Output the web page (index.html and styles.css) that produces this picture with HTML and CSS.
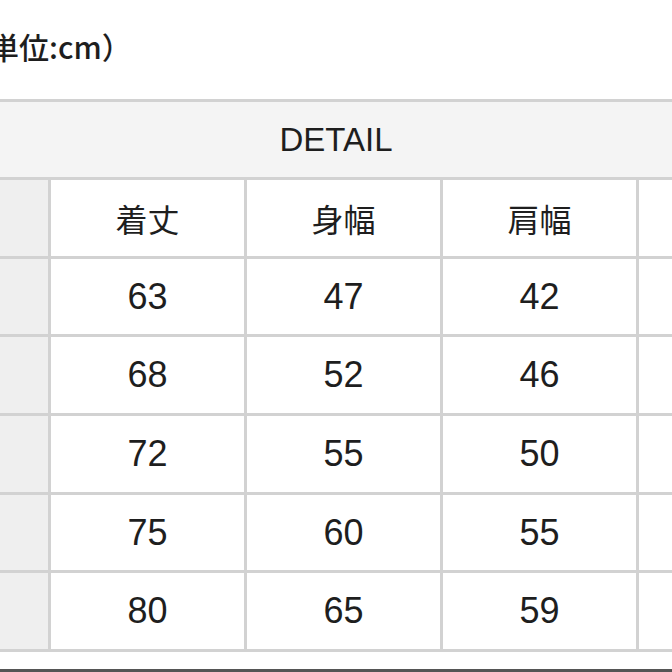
FILE: index.html
```html
<!DOCTYPE html>
<html lang="ja">
<head>
<meta charset="utf-8">
<link rel="stylesheet" href="styles.css">
</head>
<body>
<div class="page">
  <div class="unit">（単位:cm）</div>
  <div class="sheet">
    <div class="title">DETAIL</div>
    <div class="grid">
      <div class="cell label"></div><div class="cell head">着丈</div><div class="cell head">身幅</div><div class="cell head">肩幅</div><div class="cell"></div>
      <div class="cell label"></div><div class="cell num">63</div><div class="cell num">47</div><div class="cell num">42</div><div class="cell"></div>
      <div class="cell label"></div><div class="cell num">68</div><div class="cell num">52</div><div class="cell num">46</div><div class="cell"></div>
      <div class="cell label"></div><div class="cell num">72</div><div class="cell num">55</div><div class="cell num">50</div><div class="cell"></div>
      <div class="cell label"></div><div class="cell num">75</div><div class="cell num">60</div><div class="cell num">55</div><div class="cell"></div>
      <div class="cell label"></div><div class="cell num">80</div><div class="cell num">65</div><div class="cell num">59</div><div class="cell"></div>
    </div>
  </div>
  <div class="rule"></div>
</div>
</body>
</html>
```

FILE: styles.css
```css
html, body {
  margin: 0;
  padding: 0;
  background: #ffffff;
}
.page {
  width: 672px;
  height: 672px;
  overflow: hidden;
  color: #1e1e1e;
  font-family: "Liberation Sans", "Noto Sans CJK JP", sans-serif;
}
.unit {
  box-sizing: border-box;
  height: 99px;
  padding-top: 25px;
  margin-left: -41px;
  font-family: "Noto Sans CJK JP", sans-serif;
  font-weight: 500;
  font-size: 30px;
  line-height: 42px;
  white-space: nowrap;
}
.sheet {
  margin-left: -145px;
  width: 962px;
  border-top: 3px solid #d2d2d2;
}
.title {
  height: 75px;
  background: #f4f4f4;
  display: flex;
  align-items: center;
  justify-content: center;
  font-size: 33px;
}
.grid {
  display: grid;
  grid-template-columns: repeat(5, 193px);
  grid-auto-rows: 75.7px;
  gap: 3px;
  width: 977px;
  background: #d2d2d2;
  border-top: 3px solid #d2d2d2;
  border-bottom: 3px solid #d2d2d2;
}
.cell {
  background: #ffffff;
  display: flex;
  align-items: center;
  justify-content: center;
}
.cell.label {
  background: #efefef;
}
.head {
  font-family: "Noto Sans CJK JP", sans-serif;
  font-size: 32px;
}
.num {
  font-size: 36px;
}
.rule {
  margin-top: 17px;
  border-top: 3px solid #555555;
}
```
